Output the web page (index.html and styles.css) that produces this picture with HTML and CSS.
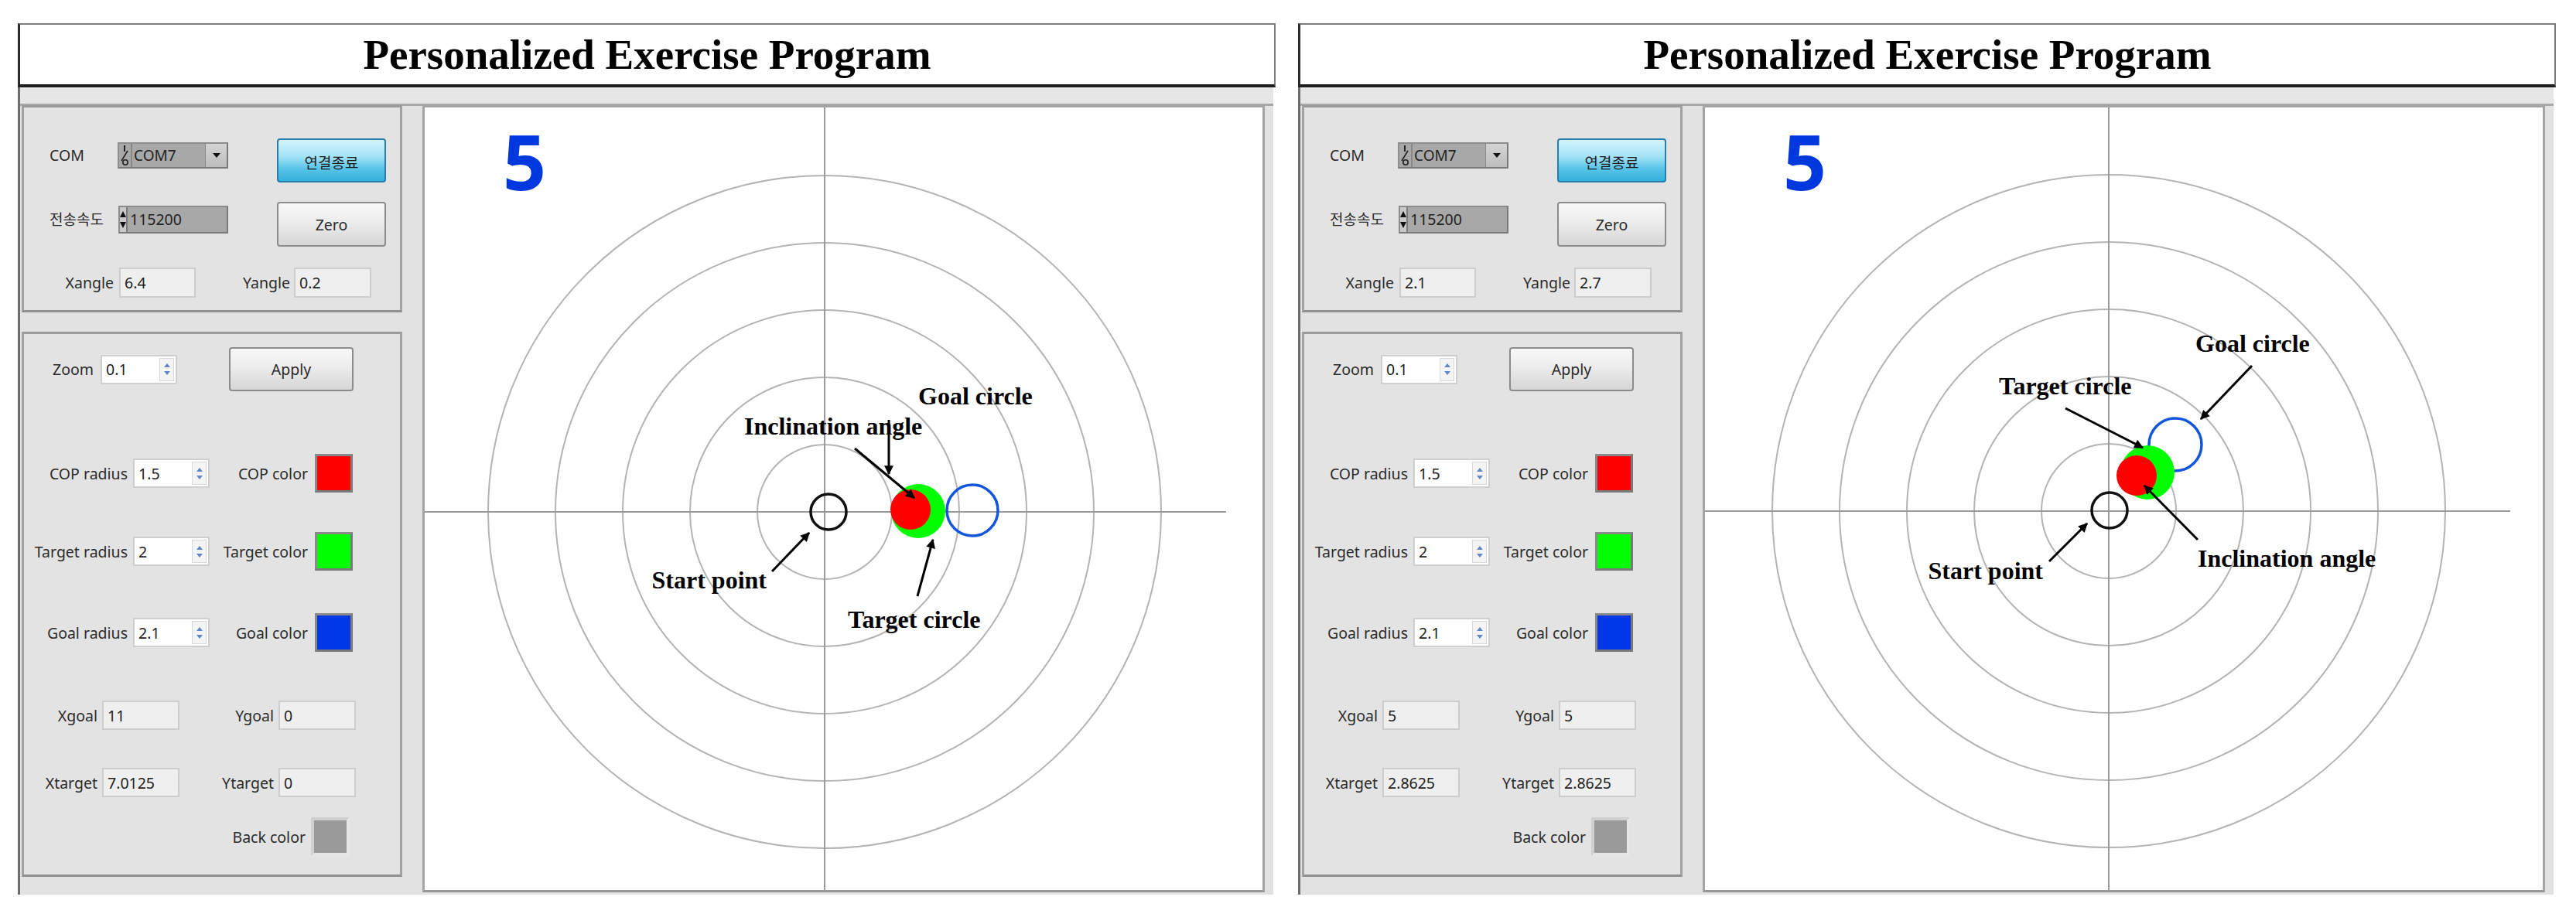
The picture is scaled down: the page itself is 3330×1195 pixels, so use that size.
FILE: index.html
```html
<!DOCTYPE html>
<html lang="ko">
<head>
<meta charset="utf-8">
<title>Personalized Exercise Program</title>
<link rel="stylesheet" href="styles.css">
</head>
<body>
<div class="screen">

  <section class="window">
    <header class="titlebar">Personalized Exercise Program</header>
    <div class="win-body">
      <div class="controls">
        <div class="panel panel-top">
          <div class="row row-1">
            <span class="lbl lbl-com">COM</span>
            <div class="combo">
              <svg class="io" viewBox="0 0 12 30"><line x1="6" y1="2" x2="6" y2="10" stroke="#222" stroke-width="2"/><line x1="2" y1="22" x2="10" y2="9" stroke="#222" stroke-width="1.6"/><circle cx="7" cy="24" r="3.2" fill="none" stroke="#222" stroke-width="1.6"/></svg>
              <span class="combo-text">COM7</span>
              <span class="combo-btn"><svg viewBox="0 0 10 6"><path d="M0 0H10L5 6Z" fill="#111"/></svg></span>
            </div>
            <div class="btn btn-blue">연결종료</div>
          </div>
          <div class="row row-2">
            <span class="lbl lbl-baud">전송속도</span>
            <div class="spinbox">
              <span class="spin-arrows"><svg viewBox="0 0 8 30"><path d="M0 12H8L4 4Z M0 18H8L4 26Z" fill="#111"/></svg></span>
              <span class="spin-text">115200</span>
            </div>
            <div class="btn btn-zero">Zero</div>
          </div>
          <div class="row row-3">
            <span class="lbl lbl-xangle">Xangle</span>
            <div class="field fld-xangle">6.4</div>
            <span class="lbl lbl-yangle">Yangle</span>
            <div class="field fld-yangle">0.2</div>
          </div>
        </div>

        <div class="panel panel-bottom">
          <div class="row row-zoom">
            <span class="lbl lbl-zoom">Zoom</span>
            <div class="field numeric"><span class="num-text">0.1</span><span class="numspin"><i class="up"></i><i class="down"></i></span></div>
            <div class="btn btn-apply">Apply</div>
          </div>
          <div class="row row-color row-cop">
            <span class="lbl lbl-radius">COP radius</span>
            <div class="field numeric"><span class="num-text">1.5</span><span class="numspin"><i class="up"></i><i class="down"></i></span></div>
            <span class="lbl lbl-color">COP color</span>
            <div class="swatch sw-red"></div>
          </div>
          <div class="row row-color row-target">
            <span class="lbl lbl-radius">Target radius</span>
            <div class="field numeric"><span class="num-text">2</span><span class="numspin"><i class="up"></i><i class="down"></i></span></div>
            <span class="lbl lbl-color">Target color</span>
            <div class="swatch sw-green"></div>
          </div>
          <div class="row row-color row-goal">
            <span class="lbl lbl-radius">Goal radius</span>
            <div class="field numeric"><span class="num-text">2.1</span><span class="numspin"><i class="up"></i><i class="down"></i></span></div>
            <span class="lbl lbl-color">Goal color</span>
            <div class="swatch sw-blue"></div>
          </div>
          <div class="row row-xy row-xgoal">
            <span class="lbl lbl-x">Xgoal</span>
            <div class="field fld-xy">11</div>
            <span class="lbl lbl-y">Ygoal</span>
            <div class="field fld-xy">0</div>
          </div>
          <div class="row row-xy row-xtarget">
            <span class="lbl lbl-x">Xtarget</span>
            <div class="field fld-xy">7.0125</div>
            <span class="lbl lbl-y">Ytarget</span>
            <div class="field fld-xy">0</div>
          </div>
          <div class="row row-back">
            <span class="lbl lbl-back">Back color</span>
            <div class="swatch sw-gray"></div>
          </div>
        </div>
      </div>

      <div class="canvas">
        <svg class="plot" viewBox="0 0 1083 1012" width="1083" height="1012">
          <defs>
            <marker id="ahL" viewBox="0 0 10 10" refX="9" refY="5" markerWidth="4.5" markerHeight="4" orient="auto"><path d="M0 0L10 5L0 10Z" fill="#000"/></marker>
          </defs>
          <g class="rings" fill="none" stroke="#b4b4b4" stroke-width="2">
            <circle cx="517" cy="523" r="87"/>
            <circle cx="517" cy="523" r="174"/>
            <circle cx="517" cy="523" r="261"/>
            <circle cx="517" cy="523" r="348"/>
            <circle cx="517" cy="523" r="435"/>
          </g>
          <line x1="517" y1="0" x2="517" y2="1012" stroke="#9a9a9a" stroke-width="2"/>
          <line x1="0" y1="523" x2="1036" y2="523" stroke="#9a9a9a" stroke-width="2"/>
          <text class="count" x="101" y="107">5</text>
          <circle cx="708" cy="521" r="33" fill="none" stroke="#1256dc" stroke-width="3.5"/>
          <circle cx="638" cy="522" r="35" fill="#00ff00"/>
          <circle cx="628" cy="520" r="26" fill="#ff0000"/>
          <circle cx="522" cy="523" r="23" fill="none" stroke="#111" stroke-width="3.5"/>
          <g class="notes">
            <text x="638" y="384">Goal circle</text>
            <text x="413" y="423">Inclination angle</text>
            <text x="442" y="622" text-anchor="end">Start point</text>
            <text x="547" y="673">Target circle</text>
          </g>
          <g stroke="#000" stroke-width="3" marker-end="url(#ahL)">
            <line x1="600" y1="404" x2="600" y2="474"/>
            <line x1="556" y1="441" x2="633" y2="505"/>
            <line x1="449" y1="600" x2="497" y2="550"/>
            <line x1="637" y1="632" x2="657" y2="559"/>
          </g>
        </svg>
      </div>
    </div>
  </section>

  <section class="window">
    <header class="titlebar">Personalized Exercise Program</header>
    <div class="win-body">
      <div class="controls">
        <div class="panel panel-top">
          <div class="row row-1">
            <span class="lbl lbl-com">COM</span>
            <div class="combo">
              <svg class="io" viewBox="0 0 12 30"><line x1="6" y1="2" x2="6" y2="10" stroke="#222" stroke-width="2"/><line x1="2" y1="22" x2="10" y2="9" stroke="#222" stroke-width="1.6"/><circle cx="7" cy="24" r="3.2" fill="none" stroke="#222" stroke-width="1.6"/></svg>
              <span class="combo-text">COM7</span>
              <span class="combo-btn"><svg viewBox="0 0 10 6"><path d="M0 0H10L5 6Z" fill="#111"/></svg></span>
            </div>
            <div class="btn btn-blue">연결종료</div>
          </div>
          <div class="row row-2">
            <span class="lbl lbl-baud">전송속도</span>
            <div class="spinbox">
              <span class="spin-arrows"><svg viewBox="0 0 8 30"><path d="M0 12H8L4 4Z M0 18H8L4 26Z" fill="#111"/></svg></span>
              <span class="spin-text">115200</span>
            </div>
            <div class="btn btn-zero">Zero</div>
          </div>
          <div class="row row-3">
            <span class="lbl lbl-xangle">Xangle</span>
            <div class="field fld-xangle">2.1</div>
            <span class="lbl lbl-yangle">Yangle</span>
            <div class="field fld-yangle">2.7</div>
          </div>
        </div>

        <div class="panel panel-bottom">
          <div class="row row-zoom">
            <span class="lbl lbl-zoom">Zoom</span>
            <div class="field numeric"><span class="num-text">0.1</span><span class="numspin"><i class="up"></i><i class="down"></i></span></div>
            <div class="btn btn-apply">Apply</div>
          </div>
          <div class="row row-color row-cop">
            <span class="lbl lbl-radius">COP radius</span>
            <div class="field numeric"><span class="num-text">1.5</span><span class="numspin"><i class="up"></i><i class="down"></i></span></div>
            <span class="lbl lbl-color">COP color</span>
            <div class="swatch sw-red"></div>
          </div>
          <div class="row row-color row-target">
            <span class="lbl lbl-radius">Target radius</span>
            <div class="field numeric"><span class="num-text">2</span><span class="numspin"><i class="up"></i><i class="down"></i></span></div>
            <span class="lbl lbl-color">Target color</span>
            <div class="swatch sw-green"></div>
          </div>
          <div class="row row-color row-goal">
            <span class="lbl lbl-radius">Goal radius</span>
            <div class="field numeric"><span class="num-text">2.1</span><span class="numspin"><i class="up"></i><i class="down"></i></span></div>
            <span class="lbl lbl-color">Goal color</span>
            <div class="swatch sw-blue"></div>
          </div>
          <div class="row row-xy row-xgoal">
            <span class="lbl lbl-x">Xgoal</span>
            <div class="field fld-xy">5</div>
            <span class="lbl lbl-y">Ygoal</span>
            <div class="field fld-xy">5</div>
          </div>
          <div class="row row-xy row-xtarget">
            <span class="lbl lbl-x">Xtarget</span>
            <div class="field fld-xy">2.8625</div>
            <span class="lbl lbl-y">Ytarget</span>
            <div class="field fld-xy">2.8625</div>
          </div>
          <div class="row row-back">
            <span class="lbl lbl-back">Back color</span>
            <div class="swatch sw-gray"></div>
          </div>
        </div>
      </div>

      <div class="canvas">
        <svg class="plot" viewBox="0 0 1083 1012" width="1083" height="1012">
          <defs>
            <marker id="ahR" viewBox="0 0 10 10" refX="9" refY="5" markerWidth="4.5" markerHeight="4" orient="auto"><path d="M0 0L10 5L0 10Z" fill="#000"/></marker>
          </defs>
          <g class="rings" fill="none" stroke="#b4b4b4" stroke-width="2">
            <circle cx="522" cy="522" r="87"/>
            <circle cx="522" cy="522" r="174"/>
            <circle cx="522" cy="522" r="261"/>
            <circle cx="522" cy="522" r="348"/>
            <circle cx="522" cy="522" r="435"/>
          </g>
          <line x1="522" y1="0" x2="522" y2="1012" stroke="#9a9a9a" stroke-width="2"/>
          <line x1="0" y1="522" x2="1041" y2="522" stroke="#9a9a9a" stroke-width="2"/>
          <text class="count" x="101" y="107">5</text>
          <circle cx="608" cy="436" r="34" fill="none" stroke="#1256dc" stroke-width="3.5"/>
          <circle cx="572" cy="472" r="35" fill="#00ff00"/>
          <circle cx="558" cy="476" r="26" fill="#ff0000"/>
          <circle cx="523" cy="521" r="23" fill="none" stroke="#111" stroke-width="3.5"/>
          <g class="notes">
            <text x="634" y="316">Goal circle</text>
            <text x="380" y="371">Target circle</text>
            <text x="637" y="594">Inclination angle</text>
            <text x="437" y="610" text-anchor="end">Start point</text>
          </g>
          <g stroke="#000" stroke-width="3" marker-end="url(#ahR)">
            <line x1="707" y1="334" x2="641" y2="403"/>
            <line x1="466" y1="389" x2="566" y2="440"/>
            <line x1="637" y1="559" x2="568" y2="489"/>
            <line x1="445" y1="587" x2="494" y2="538"/>
          </g>
        </svg>
      </div>
    </div>
  </section>

</div>
</body>
</html>
```

FILE: styles.css
```css
* { box-sizing: border-box; }

html, body {
  margin: 0;
  padding: 0;
  background: #ffffff;
}

body {
  width: 3330px;
  height: 1195px;
  overflow: hidden;
  font-family: "Noto Sans", "Noto Sans CJK KR", sans-serif;
  color: #2a2a2a;
}

.screen {
  display: flex;
  gap: 29px;
  padding: 30px 0 0 23px;
}

.window {
  width: 1626px;
  display: flex;
  flex-direction: column;
}

.titlebar {
  height: 83px;
  background: #ffffff;
  border: 2px solid #7c7c7c;
  border-left: 3px solid #2a2a2a;
  border-bottom: 4px solid #1e1e1e;
  font-family: "Liberation Serif", "Times New Roman", serif;
  font-weight: bold;
  font-size: 55px;
  line-height: 77px;
  text-align: center;
  color: #000;
}

.win-body {
  width: 1623px;
  height: 1044px;
  display: flex;
  align-items: flex-start;
  gap: 26px;
  padding: 23px 11px 0 2px;
  border-left: 3px solid #6c6c6c;
  background: linear-gradient(#e6e6e6 0 21px, #a8a8a8 21px 24px, #e2e2e2 24px);
}

.controls {
  width: 492px;
  display: flex;
  flex-direction: column;
  gap: 25px;
}

.panel {
  background: #e3e3e3;
  border: 3px solid #a2a2a2;
  border-top-color: #9a9a9a;
  border-bottom-color: #8f8f8f;
}

.panel-top {
  height: 268px;
  padding-top: 40px;
}

.panel-bottom {
  height: 705px;
  padding-top: 17px;
}

.row {
  display: flex;
  align-items: center;
}

.lbl {
  font-size: 19.5px;
  white-space: nowrap;
  color: #2b2b2b;
}

/* ---------- top panel ---------- */
.row-1 { height: 57px; align-items: flex-start; }
.row-2 { height: 58px; margin-top: 25px; align-items: flex-start; }
.row-3 { height: 39px; margin-top: 27px; }

.lbl-com, .lbl-baud {
  margin-left: 33px;
  margin-top: 5px;
  line-height: 34px;
}
.lbl-com { width: 88px; }
.lbl-baud { width: 89px; font-family: "Noto Sans CJK KR", "Noto Sans", sans-serif; font-size: 19px; }

.combo {
  width: 143px;
  height: 34px;
  margin-top: 5px;
  display: flex;
  align-items: center;
  background: #a8a8a8;
  border: 2px solid #8e8e8e;
  border-right-color: #7a7a7a;
  border-bottom-color: #7a7a7a;
}
.combo .io {
  width: 12px;
  height: 30px;
  flex: none;
  margin-left: 1px;
}
.combo-text {
  font-size: 19px;
  color: #222;
  margin-left: 2px;
  flex: 1;
  border-left: 2px solid #888;
  padding-left: 2px;
  line-height: 30px;
}
.combo-btn {
  width: 28px;
  height: 30px;
  background: linear-gradient(#d4d4d4, #bdbdbd);
  border-left: 1px solid #8a8a8a;
  display: flex;
  align-items: center;
  justify-content: center;
}
.combo-btn svg { width: 10px; height: 6px; }

.spinbox {
  width: 142px;
  height: 36px;
  margin-top: 5px;
  display: flex;
  background: #a8a8a8;
  border: 2px solid #8c8c8c;
  border-right-color: #7a7a7a;
  border-bottom-color: #7a7a7a;
}
.spin-arrows {
  width: 10px;
  background: #c9c9c9;
  border-right: 2px solid #7d7d7d;
  display: flex;
  align-items: center;
}
.spin-arrows svg { width: 8px; height: 30px; }
.spin-text {
  font-size: 19.5px;
  line-height: 32px;
  padding-left: 3px;
  color: #222;
}

.btn {
  height: 57px;
  display: flex;
  align-items: center;
  justify-content: center;
  font-size: 19.5px;
  color: #2a2a2a;
  border: 2px solid #8c8c8c;
  border-radius: 4px;
  background: linear-gradient(#f8f8f8 0%, #ececec 45%, #d6d6d6 100%);
}
.btn-blue {
  width: 141px;
  margin-left: 63px;
  border-color: #2a7eab;
  background: linear-gradient(#d3f3fd 0%, #a5e3f7 40%, #58c4e8 70%, #35b0dc 100%);
  font-family: "Noto Sans CJK KR", "Noto Sans", sans-serif;
  font-size: 19px;
  color: #1c1c1c;
  padding-top: 4px;
}
.btn-zero {
  width: 141px;
  height: 58px;
  margin-left: 63px;
}

.field {
  height: 38px;
  display: flex;
  align-items: center;
  font-size: 19.5px;
  color: #222;
  background: #efefef;
  border: 2px solid #cdcdcd;
  padding-left: 5px;
}

.lbl-xangle {
  width: 116px;
  text-align: right;
}
.fld-xangle {
  width: 99px;
  height: 39px;
  margin-left: 7px;
}
.lbl-yangle {
  width: 122px;
  text-align: right;
}
.fld-yangle {
  width: 100px;
  height: 39px;
  margin-left: 5px;
}

/* ---------- bottom panel ---------- */
.row-zoom { height: 57px; }
.row-cop { margin-top: 81px; }
.row-target { margin-top: 51px; }
.row-goal { margin-top: 55px; }
.row-color { height: 50px; }
.row-xgoal { margin-top: 63px; }
.row-xtarget { margin-top: 49px; }
.row-xy { height: 38px; }
.row-back { height: 50px; margin-top: 26px; }

.lbl-zoom {
  width: 99px;
  text-align: right;
  padding-right: 9px;
}

.numeric {
  width: 99px;
  background: #ffffff;
  border-color: #cfcfcf;
  padding-right: 2px;
}
.num-text { flex: 1; }
.numspin {
  width: 19px;
  height: 30px;
  display: flex;
  flex-direction: column;
  justify-content: center;
  align-items: center;
  gap: 5px;
  border: 1px solid #d8d8d8;
  background: #f4f4f4;
}
.numspin i {
  width: 0;
  height: 0;
  border-left: 4px solid transparent;
  border-right: 4px solid transparent;
}
.numspin .up { border-bottom: 5px solid #5f86c8; }
.numspin .down { border-top: 5px solid #5f86c8; }

.btn-apply {
  width: 161px;
  margin-left: 67px;
}

.lbl-radius {
  width: 141px;
  text-align: right;
  padding-right: 7px;
}
.lbl-color {
  width: 136px;
  text-align: right;
  padding-right: 9px;
}

.swatch {
  width: 49px;
  height: 50px;
  border: 3px solid #7a7a7a;
  border-top-color: #8a8a8a;
  border-left-color: #8a8a8a;
}
.sw-red { background: #ff0000; }
.sw-green { background: #00ff00; }
.sw-blue { background: #0037e6; }
.sw-gray {
  width: 50px;
  background: #9a9a9a;
  border: 4px solid #e6e6e6;
  border-top-color: #d0d0d0;
  border-left-color: #d0d0d0;
}

.lbl-x {
  width: 101px;
  text-align: right;
  padding-right: 6px;
}
.lbl-y {
  width: 128px;
  text-align: right;
  padding-right: 6px;
}
.fld-xy { width: 100px; }

.lbl-back {
  width: 371px;
  text-align: right;
  padding-right: 7px;
}

/* ---------- canvas ---------- */
.canvas {
  width: 1089px;
  height: 1018px;
  background: #ffffff;
  border: 3px solid #a4a4a4;
  border-bottom-color: #989898;
  overflow: hidden;
}

.plot {
  display: block;
}

.count {
  font-family: "Noto Sans", sans-serif;
  font-weight: bold;
  font-size: 98px;
  fill: #0038e0;
}

.notes text {
  font-family: "Liberation Serif", "Times New Roman", serif;
  font-weight: bold;
  font-size: 32px;
  fill: #000;
}
```
